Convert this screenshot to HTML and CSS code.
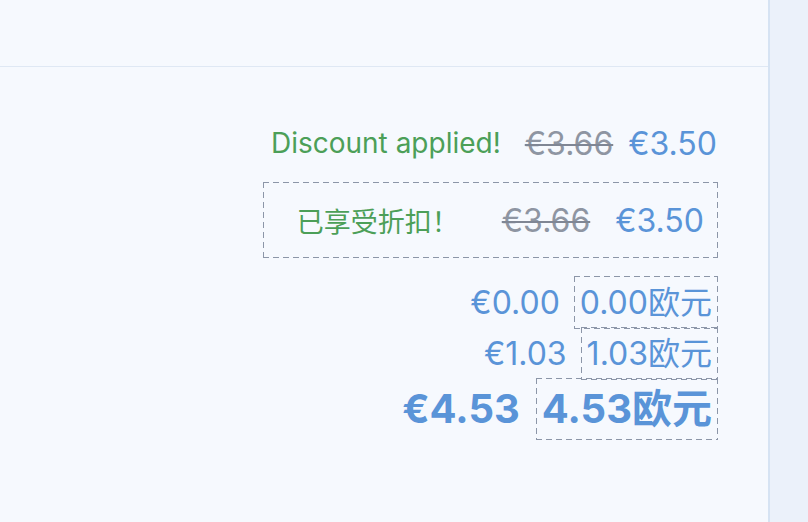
FILE: index.html
```html
<!DOCTYPE html>
<html lang="zh">
<head>
<meta charset="utf-8">
<title>Order summary</title>
<link rel="stylesheet" href="styles.css">
</head>
<body>
<div class="app">
  <main class="main">
    <header class="topbar"></header>
    <section class="summary">
      <div class="discount">
        <span class="label">Discount applied!</span>
        <s class="old">€3.66</s>
        <span class="price">€3.50</span>
      </div>
      <div class="discount outlined zh">
        <span class="label">已享受折扣！</span>
        <s class="old">€3.66</s>
        <span class="price">€3.50</span>
      </div>
      <div class="totals">
        <div class="total-row">
          <span class="amount">€0.00</span>
          <span class="amount outlined">0.00欧元</span>
        </div>
        <div class="total-row">
          <span class="amount">€1.03</span>
          <span class="amount outlined">1.03欧元</span>
        </div>
        <div class="total-row grand">
          <span class="amount">€4.53</span>
          <span class="amount outlined">4.53欧元</span>
        </div>
      </div>
    </section>
  </main>
  <aside class="side"></aside>
</div>
</body>
</html>
```

FILE: styles.css
```css
* { box-sizing: border-box; }

html, body {
  margin: 0;
  padding: 0;
  height: 100%;
}

body {
  font-family: Inter, "Noto Sans CJK SC", sans-serif;
  background: #f6f9fe;
}

.app {
  display: flex;
  height: 100%;
}

.main {
  width: 770px;
  flex: none;
  border-right: 2px solid #d6e3f3;
  background: #f6f9fe;
}

.side {
  flex: 1;
  background: #ebf1fa;
}

.topbar {
  height: 67px;
  border-bottom: 1px solid #dfe8f4;
}

.summary {
  padding: 56px 51px 0 0;
  display: flex;
  flex-direction: column;
  align-items: flex-end;
}

.discount {
  display: flex;
  align-items: center;
  height: 40px;
}

.label {
  color: #4c9f58;
  font-size: 28px;
  margin-right: 24px;
}

.old {
  color: #8e95a2;
  font-size: 32px;
  margin-right: 15px;
  text-decoration-thickness: 2px;
  text-decoration-color: #7f8694;
}

.price {
  color: #5a94d8;
  font-size: 32px;
}

.outlined {
  position: relative;
}

.outlined::after {
  content: "";
  position: absolute;
  inset: -1px;
  pointer-events: none;
  background:
    linear-gradient(90deg, #8c96a8 6px, transparent 6px) top left / 10px 1px repeat-x,
    linear-gradient(90deg, #8c96a8 6px, transparent 6px) bottom left / 10px 1px repeat-x,
    linear-gradient(180deg, #8c96a8 6px, transparent 6px) top left / 1px 10px repeat-y,
    linear-gradient(180deg, #8c96a8 6px, transparent 6px) top right / 1px 10px repeat-y;
}

.discount.zh {
  margin-top: 20px;
  height: 74px;
  width: 453px;
  padding: 0 13px 0 30px;
  justify-content: flex-end;
}

.discount.zh .label {
  margin-right: 43px;
  font-size: 27px;
}

.discount.zh .old {
  margin-right: 25px;
}

.totals {
  margin-top: 20px;
  display: flex;
  flex-direction: column;
  align-items: flex-end;
}

.total-row {
  display: flex;
  align-items: center;
}

.amount {
  display: inline-block;
  color: #5a94d8;
  font-size: 32px;
  line-height: 51px;
}

.amount.outlined {
  margin-left: 15px;
  padding: 0 5px;
}

.grand .amount {
  font-size: 40px;
  font-weight: 700;
  line-height: 60px;
}

.grand .amount.outlined {
  margin-left: 17px;
}
```
